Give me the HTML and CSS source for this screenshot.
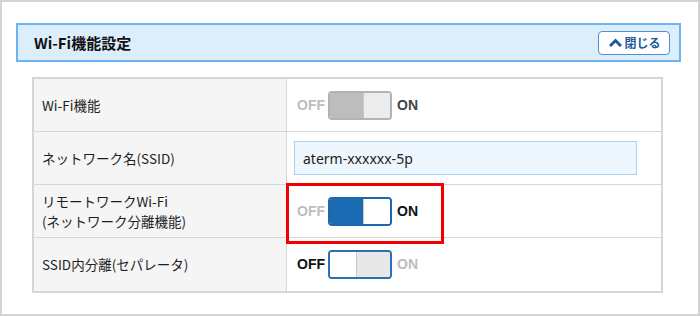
FILE: index.html
```html
<!DOCTYPE html>
<html lang="ja">
<head>
<meta charset="utf-8">
<link rel="stylesheet" href="styles.css">
</head>
<body>
<div class="panel">
  <div class="panel-head">
    <h2 class="panel-title">Wi-Fi機能設定</h2>
    <button class="close-btn" type="button">
      <svg class="chev" width="13" height="9" viewBox="0 0 13 9"><path d="M1 8 L6.5 2.5 L12 8" fill="none" stroke="#1d5a9a" stroke-width="3"/></svg>
      <span>閉じる</span>
    </button>
  </div>
  <div class="settings">
    <div class="label">Wi-Fi機能</div>
    <div class="value">
      <div class="switch-row">
        <span class="sw-text dim">OFF</span>
        <span class="switch gray-on"><span class="track"></span><span class="knob"></span></span>
        <span class="sw-text dark">ON</span>
      </div>
    </div>
    <div class="label">ネットワーク名(SSID)</div>
    <div class="value">
      <input class="ssid" type="text" value="aterm-xxxxxx-5p">
    </div>
    <div class="label two-line">リモートワークWi-Fi<br>(ネットワーク分離機能)</div>
    <div class="value highlight">
      <div class="switch-row">
        <span class="sw-text dim">OFF</span>
        <span class="switch blue-on"><span class="track"></span><span class="knob"></span></span>
        <span class="sw-text">ON</span>
      </div>
    </div>
    <div class="label">SSID内分離(セパレータ)</div>
    <div class="value">
      <div class="switch-row">
        <span class="sw-text">OFF</span>
        <span class="switch off"><span class="knob"></span><span class="track"></span></span>
        <span class="sw-text dim">ON</span>
      </div>
    </div>
  </div>
</div>
</body>
</html>
```

FILE: styles.css
```css
* { box-sizing: border-box; }
html, body { margin: 0; padding: 0; background: #fff; }
body {
  font-family: "Noto Sans CJK JP", "Noto Sans", sans-serif;
  color: #333;
}
.panel {
  width: 700px;
  height: 316px;
  border: 2px solid #d4d4d4;
  padding: 21px 17px 0 14px;
}
.panel-head {
  height: 39px;
  border: 2px solid #6cb3ef;
  background: #dcedfc;
  display: flex;
  align-items: center;
  justify-content: space-between;
  padding: 0 9px 0 16px;
}
.panel-title {
  margin: 0;
  font-size: 15px;
  font-weight: bold;
  color: #111;
  line-height: 20px;
}
.close-btn {
  width: 72px;
  height: 24px;
  border: 1px solid #4f8fcf;
  border-radius: 4px;
  background: #fff;
  display: flex;
  align-items: center;
  justify-content: center;
  gap: 2px;
  padding: 0 0 0 2px;
  font-family: inherit;
  font-size: 12px;
  font-weight: bold;
  color: #1d5a9a;
  line-height: 14px;
}
.chev { display: block; }
.settings {
  margin: 15px 0 0 16px;
  width: 631px;
  display: grid;
  grid-template-columns: 253px 1fr;
  grid-auto-rows: 53px;
  border: 2px solid #d6d6d6;
}
.label, .value {
  display: flex;
  align-items: center;
  border-bottom: 1px solid #d6d6d6;
  font-size: 13.5px;
  line-height: 17px;
}
.label:nth-last-child(2), .value:last-child { border-bottom: none; }
.label {
  background: #f5f5f5;
  border-right: 1px solid #d6d6d6;
  padding-left: 8px;
  color: #1e1e1e;
}
.label.two-line { line-height: 20px; }
.value {
  padding-left: 10px;
  position: relative;
}
.highlight::after {
  content: "";
  position: absolute;
  left: -1px;
  top: -2px;
  width: 152px;
  height: 55px;
  border: 3px solid #f20000;
}
.switch-row {
  display: flex;
  align-items: center;
  gap: 5px;
}
.sw-text {
  font-family: "Liberation Sans", Arial, sans-serif;
  font-weight: bold;
  font-size: 14px;
  color: #111;
  width: 26px;
}
.sw-text:last-child { width: auto; }
.sw-text.dim { color: #bdbdbd; }
.sw-text.dark { color: #444; }
.switch {
  display: flex;
  width: 64px;
  height: 29px;
  border-radius: 4px;
  border: 2px solid;
  overflow: hidden;
}
.switch .track { flex: 1; }
.switch .knob { width: 27px; }
.gray-on { border-color: #b3b3b3; }
.gray-on .track { background: #bdbdbd; }
.gray-on .knob { background: #ececec; border-left: 1px solid #c8c8c8; }
.blue-on { border-color: #1c67ad; }
.blue-on .track { background: #1a6bb1; }
.blue-on .knob { background: #fff; border-left: 1px solid #c8c8c8; }
.off { border-color: #2a70b3; }
.off .knob { background: #fff; border-right: 1px solid #c8c8c8; }
.off .track { background: #e8e8e8; }
.ssid {
  width: 343px;
  height: 34px;
  border: 1px solid #a6d3f4;
  background: #eef7fe;
  font-family: "Noto Sans", "Noto Sans CJK JP", sans-serif;
  font-size: 14px;
  color: #222;
  padding: 0 8px;
  margin-left: -3px;
  outline: none;
}
```
